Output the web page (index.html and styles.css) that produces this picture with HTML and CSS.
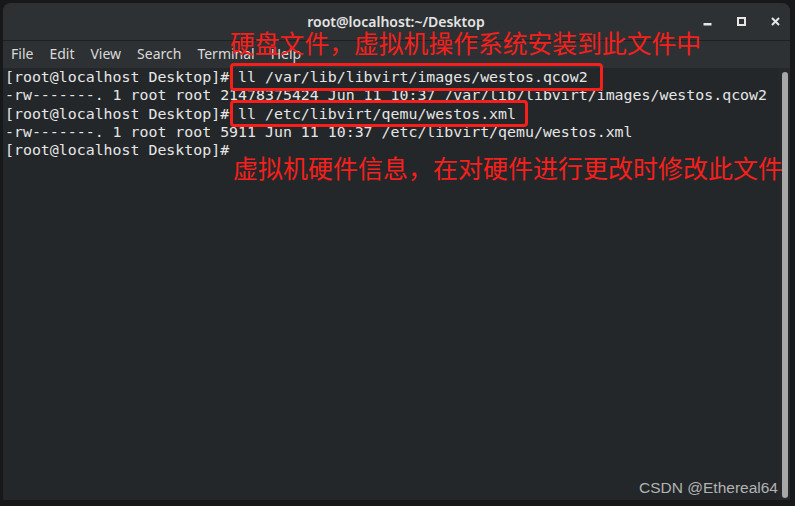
FILE: index.html
```html
<!DOCTYPE html>
<html lang="en">
<head>
    <meta charset="UTF-8">
    <meta name="viewport" content="width=device-width, initial-scale=1.0">
    <title>root@localhost:~/Desktop</title>
    <link rel="stylesheet" href="styles.css">
</head>
<body>
    <div class="window">
        <div class="titlebar">
            <span class="title">root@localhost:~/Desktop</span>
            <div class="controls">
                <svg class="ctl" width="9" height="9" viewBox="0 0 9 9"><rect x="0.5" y="6" width="8" height="2.5" fill="#e6e6e6"/></svg>
                <svg class="ctl" width="9" height="9" viewBox="0 0 9 9"><rect x="1" y="1" width="7" height="7" fill="none" stroke="#e6e6e6" stroke-width="2"/></svg>
                <svg class="ctl" width="9" height="9" viewBox="0 0 9 9"><path d="M1 1 L8 8 M8 1 L1 8" stroke="#e6e6e6" stroke-width="2"/></svg>
            </div>
        </div>
        <div class="menubar">
            <span>File</span>
            <span>Edit</span>
            <span>View</span>
            <span>Search</span>
            <span>Terminal</span>
            <span>Help</span>
        </div>
        <div class="term">
            <pre class="output">[root@localhost Desktop]# ll /var/lib/libvirt/images/westos.qcow2
-rw-------. 1 root root 21478375424 Jun 11 10:37 /var/lib/libvirt/images/westos.qcow2
[root@localhost Desktop]# ll /etc/libvirt/qemu/westos.xml
-rw-------. 1 root root 5911 Jun 11 10:37 /etc/libvirt/qemu/westos.xml
[root@localhost Desktop]#</pre>
            <div class="scrollbar"><div class="thumb"></div></div>
            <span class="watermark">CSDN @Ethereal64</span>
        </div>
    </div>

    <!-- annotations drawn over the screenshot -->
    <div class="note note-top">硬盘文件，虚拟机操作系统安装到此文件中</div>
    <div class="box box-one"></div>
    <div class="box box-two"></div>
    <div class="note note-bottom">虚拟机硬件信息，在对硬件进行更改时修改此文件</div>
</body>
</html>
```

FILE: styles.css
```css
body {
    margin: 0;
    width: 795px;
    height: 506px;
    background-color: #171819;
    overflow: hidden;
    position: relative;
}

.window {
    margin: 3px 5px 6px 3px;
    height: 497px;
    border-radius: 8px 8px 0 0;
    background-color: #232729;
    display: flex;
    flex-direction: column;
    overflow: hidden;
}

.titlebar {
    height: 37px;
    background-color: #2e3133;
    border-bottom: 1px solid #1e2021;
    display: flex;
    align-items: center;
    justify-content: center;
    position: relative;
}

.title {
    font-family: "Noto Sans", sans-serif;
    font-size: 14px;
    font-weight: 600;
    color: #e4e4e4;
    margin-right: 1px;
    margin-bottom: 1px;
}

.controls {
    position: absolute;
    right: 10px;
    top: 14px;
    display: flex;
    gap: 25px;
}

.ctl {
    display: block;
}

.menubar {
    height: 27px;
    box-sizing: border-box;
    padding: 0 0 3px 8px;
    background-color: #2e3133;
    display: flex;
    align-items: center;
    font-family: "Noto Sans", sans-serif;
    font-size: 14px;
    color: #dadada;
}

.menubar span {
    margin-right: 16px;
}

.term {
    flex: 1;
    position: relative;
    display: flex;
}

.output {
    flex: 1;
    margin: 0;
    padding: 0 0 0 2px;
    font-family: "DejaVu Sans Mono", monospace;
    font-size: 14.9px;
    line-height: 18.25px;
    color: #e6e6e6;
}

.scrollbar {
    width: 12px;
    background-color: #25292b;
    padding: 4px 0 2px 4px;
    box-sizing: border-box;
}

.thumb {
    width: 6px;
    height: 100%;
    border-radius: 3px;
    background-color: #a8a8a8;
}

.watermark {
    position: absolute;
    right: 12px;
    bottom: 3px;
    font-family: "Liberation Sans", sans-serif;
    font-size: 15.5px;
    color: #b3b3b3;
}

.note {
    position: absolute;
    font-family: "Noto Sans CJK SC", sans-serif;
    line-height: 1;
    color: #f5201c;
}

.note-top {
    left: 230px;
    top: 30px;
    font-size: 24.8px;
}

.note-bottom {
    left: 233px;
    top: 155px;
    font-size: 25px;
}

.box {
    position: absolute;
    border: 3px solid #f5201c;
    border-radius: 4px;
    box-sizing: border-box;
}

.box-one {
    left: 230px;
    top: 63px;
    width: 373px;
    height: 28px;
}

.box-two {
    left: 230px;
    top: 100px;
    width: 298px;
    height: 27px;
}
```
